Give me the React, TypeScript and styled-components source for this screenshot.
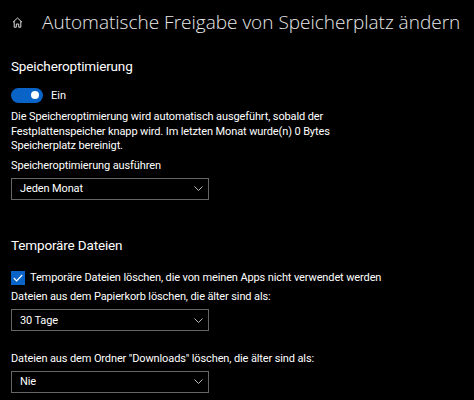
import React from "react";
import styled, { createGlobalStyle } from "styled-components";

const Global = createGlobalStyle`
  html, body { margin: 0; padding: 0; background: #000; }
  body { font-family: Roboto, "Open Sans", sans-serif; color: #fff; }
  * { box-sizing: border-box; }
`;

const Page = styled.div`
  width: 474px;
  height: 400px;
  background: #000;
  overflow: hidden;
`;

const Header = styled.header`
  height: 44px;
  display: flex;
  align-items: center;
  padding-left: 12px;
  gap: 19px;
`;

const HomeIcon = styled.svg`
  width: 11px;
  height: 11px;
  flex: none;
`;

const Title = styled.h1`
  margin: 0;
  font-family: "Open Sans", sans-serif;
  font-size: 19px;
  font-weight: 300;
  color: #e8e8e8;
  line-height: 24px;
  white-space: nowrap;
`;

const Content = styled.main`
  padding-left: 11px;
  display: flex;
  flex-direction: column;
  align-items: flex-start;
`;

const SectionTitle = styled.h2<{ $top: number }>`
  margin: ${(p) => p.$top}px 0 0;
  font-size: 13.5px;
  font-weight: 400;
  letter-spacing: -0.15px;
  line-height: 20px;
  color: #fff;
`;

const ToggleRow = styled.div`
  margin-top: 9px;
  height: 20px;
  display: flex;
  align-items: center;
  gap: 8px;
  font-size: 11px;
`;

const Toggle = styled.div`
  width: 32px;
  height: 15px;
  border-radius: 8px;
  background: #0a64c8;
  display: flex;
  align-items: center;
  justify-content: flex-end;
  padding-right: 4px;
`;

const Knob = styled.span`
  width: 8px;
  height: 8px;
  border-radius: 50%;
  background: #fff;
`;

const Text = styled.p<{ $top: number }>`
  margin: ${(p) => p.$top}px 0 0;
  font-size: 11px;
  letter-spacing: -0.12px;
  line-height: 14.5px;
  color: #fff;
`;

const Select = styled.div<{ $top: number }>`
  margin-top: ${(p) => p.$top}px;
  width: 198px;
  height: 22px;
  border: 1.5px solid #666;
  display: flex;
  align-items: center;
  justify-content: space-between;
  padding: 0 5px 0 8px;
  font-size: 11px;
  letter-spacing: -0.12px;
  color: #fff;
`;

const Chevron = styled.svg`
  width: 9px;
  height: 5px;
`;

const CheckRow = styled.label`
  margin-top: 15px;
  height: 16px;
  display: flex;
  align-items: center;
  gap: 5px;
  font-size: 11px;
  letter-spacing: -0.12px;
`;

const Box = styled.span`
  width: 14px;
  height: 14px;
  background: #0a64c8;
  display: flex;
  align-items: center;
  justify-content: center;
`;

const Dropdown = ({ value, top }: { value: string; top: number }) => (
  <Select $top={top}>
    <span>{value}</span>
    <Chevron viewBox="0 0 9 5">
      <path d="M0.5 0.5 L4.5 4.5 L8.5 0.5" fill="none" stroke="#bbb" strokeWidth="1" />
    </Chevron>
  </Select>
);

export default function App() {
  return (
    <Page>
      <Global />
      <Header>
        <HomeIcon viewBox="0 0 11 11">
          <path
            d="M1 5.2 L5.5 1 L10 5.2 M2.2 4.2 V10.2 H4.3 V7 H6.7 V10.2 H8.8 V4.2"
            fill="none"
            stroke="#ddd"
            strokeWidth="1"
          />
        </HomeIcon>
        <Title>Automatische Freigabe von Speicherplatz ändern</Title>
      </Header>
      <Content>
        <SectionTitle $top={12}>Speicheroptimierung</SectionTitle>
        <ToggleRow>
          <Toggle>
            <Knob />
          </Toggle>
          <span>Ein</span>
        </ToggleRow>
        <Text $top={5}>
          Die Speicheroptimierung wird automatisch ausgeführt, sobald der
          <br />
          Festplattenspeicher knapp wird. Im letzten Monat wurde(n) 0 Bytes
          <br />
          Speicherplatz bereinigt.
        </Text>
        <Text $top={5}>Speicheroptimierung ausführen</Text>
        <Dropdown value="Jeden Monat" top={4.5} />
        <SectionTitle $top={35}>Temporäre Dateien</SectionTitle>
        <CheckRow>
          <Box>
            <svg width="10" height="8" viewBox="0 0 10 8">
              <path d="M0.8 4 L3.6 6.8 L9.2 1" fill="none" stroke="#fff" strokeWidth="1.2" />
            </svg>
          </Box>
          <span>Temporäre Dateien löschen, die von meinen Apps nicht verwendet werden</span>
        </CheckRow>
        <Text $top={4.5}>Dateien aus dem Papierkorb löschen, die älter sind als:</Text>
        <Dropdown value="30 Tage" top={4.5} />
        <Text $top={20.5}>Dateien aus dem Ordner "Downloads" löschen, die älter sind als:</Text>
        <Dropdown value="Nie" top={4.5} />
      </Content>
    </Page>
  );
}
